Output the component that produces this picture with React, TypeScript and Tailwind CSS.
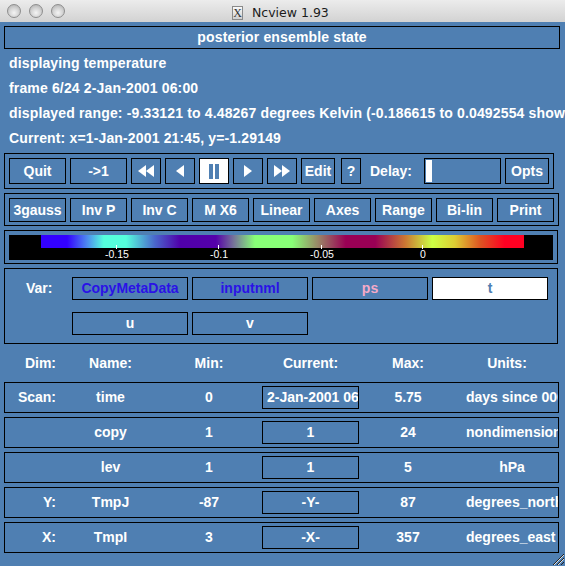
import React from 'react';

function Btn({
  w,
  h,
  ml = 0,
  children,
  className = '',
}: {
  w: string;
  h: string;
  ml?: number;
  children?: React.ReactNode;
  className?: string;
}) {
  return (
    <div
      className={`flex shrink-0 items-center justify-center border border-black font-bold text-[14px] text-white ${w} ${h} ${className}`}
      style={ml ? { marginLeft: ml } : undefined}
    >
      {children}
    </div>
  );
}

function Tri({ dir, n }: { dir: 'l' | 'r'; n: number }) {
  const one = (x: number) =>
    dir === 'l' ? `M${x + 8} 0 L${x} 6 L${x + 8} 12 Z` : `M${x} 0 L${x + 8} 6 L${x} 12 Z`;
  return (
    <svg width={n * 8} height="12" viewBox={`0 0 ${n * 8} 12`}>
      {Array.from({ length: n }).map((_, i) => (
        <path key={i} d={one(i * 8)} fill="#fff" />
      ))}
    </svg>
  );
}

const dims = [
  { dim: 'Scan:', name: 'time', min: '0', cur: '2-Jan-2001 06:00', curLeft: true, max: '5.75', units: 'days since 0000-00-00', unitsLeft: true },
  { dim: '', name: 'copy', min: '1', cur: '1', max: '24', units: 'nondimensional', unitsLeft: true },
  { dim: '', name: 'lev', min: '1', cur: '1', max: '5', units: 'hPa' },
  { dim: 'Y:', name: 'TmpJ', min: '-87', cur: '-Y-', max: '87', units: 'degrees_north', unitsLeft: true },
  { dim: 'X:', name: 'TmpI', min: '3', cur: '-X-', max: '357', units: 'degrees_east', unitsLeft: true },
];

const ticks = [
  { x: 107, label: '-0.15' },
  { x: 209, label: '-0.1' },
  { x: 312, label: '-0.05' },
  { x: 413, label: '0' },
];

export default function App() {
  return (
    <div className="relative h-[566px] w-[565px] overflow-hidden bg-[#4f7fb2] font-['Liberation_Sans',Arial,sans-serif] text-white">
      {/* title bar */}
      <div className="relative flex h-[22px] items-center bg-[linear-gradient(to_bottom,#ececec,#d2d2d2)]">
        <div className="flex gap-[8px] pl-[7px]">
          {[0, 1, 2].map((i) => (
            <div
              key={i}
              className="h-[14px] w-[14px] rounded-full border border-[#8e8e8e] bg-[radial-gradient(circle_at_50%_65%,#f4f4f4_0%,#d6d6d6_45%,#a9a9a9_100%)]"
            />
          ))}
        </div>
        <div className="absolute left-[232px] top-[4px] flex items-center gap-[9px]">
          <div className="flex h-[14px] w-[11px] items-center justify-center border border-[#8a8a8a] bg-[linear-gradient(to_bottom,#fafafa,#cfcfcf)] font-['Liberation_Serif',serif] text-[12px] leading-none text-[#333]">
            X
          </div>
          <span className="font-['DejaVu_Sans',sans-serif] text-[12.5px] text-[#1b1b1b]">Ncview 1.93</span>
        </div>
      </div>

      <div className="pl-[4px] text-[14px] font-bold tracking-[0.15px]">
        {/* header box */}
        <div className="mt-[4px] flex h-[23px] w-[556px] items-center justify-center border border-black">
          posterior ensemble state
        </div>

        <div className="mt-[2px] pl-[5px] whitespace-nowrap">
          <div className="flex h-[25px] items-center">displaying temperature</div>
          <div className="flex h-[25px] items-center">frame 6/24 2-Jan-2001 06:00</div>
          <div className="flex h-[25px] items-center">
            displayed range: -9.33121 to 4.48267 degrees Kelvin (-0.186615 to 0.0492554 shown)
          </div>
          <div className="flex h-[25px] items-center">Current: x=1-Jan-2001 21:45, y=-1.29149</div>
        </div>

        {/* control row */}
        <div className="mt-[2px] flex w-[550px] items-center border border-black p-[4px] tracking-normal">
          <Btn w="w-[57px]" h="h-[26px]">Quit</Btn>
          <Btn w="w-[57px]" h="h-[26px]" ml={4}>-&gt;1</Btn>
          <Btn w="w-[30px]" h="h-[26px]" ml={4}><Tri dir="l" n={2} /></Btn>
          <Btn w="w-[30px]" h="h-[26px]" ml={4}><Tri dir="l" n={1} /></Btn>
          <Btn w="w-[30px]" h="h-[26px]" ml={4} className="bg-white">
            <div className="flex gap-[2px]">
              <div className="h-[15px] w-[4px] bg-[#4f7fb2]" />
              <div className="h-[15px] w-[4px] bg-[#4f7fb2]" />
            </div>
          </Btn>
          <Btn w="w-[30px]" h="h-[26px]" ml={4}><Tri dir="r" n={1} /></Btn>
          <Btn w="w-[30px]" h="h-[26px]" ml={4}><Tri dir="r" n={2} /></Btn>
          <Btn w="w-[34px]" h="h-[26px]" ml={4}>Edit</Btn>
          <Btn w="w-[20px]" h="h-[26px]" ml={6}>?</Btn>
          <div className="ml-[9px] w-[44px] shrink-0 whitespace-nowrap">Delay:</div>
          <div className="ml-[10px] flex h-[26px] w-[77px] shrink-0 items-center border border-black pl-[1px]">
            <div className="h-[22px] w-[6px] bg-white" />
          </div>
          <Btn w="w-[44px]" h="h-[26px]" ml={4}>Opts</Btn>
        </div>

        {/* option row */}
        <div className="mt-[4px] flex w-[555px] gap-[4px] border border-black px-[4px] pb-[3px] pt-[4px] tracking-normal">
          {['3gauss', 'Inv P', 'Inv C', 'M X6', 'Linear', 'Axes', 'Range', 'Bi-lin', 'Print'].map((t) => (
            <Btn key={t} w="w-[57px]" h="h-[24px]" className="whitespace-nowrap">
              {t}
            </Btn>
          ))}
        </div>

        {/* colorbar */}
        <div className="mt-[4px] w-[554px] border border-black px-[4px] pb-[3px] pt-[4px]">
          <div className="relative h-[25px] w-[544px] bg-black">
            <div className="absolute left-[32px] top-0 h-[13px] w-[483px] bg-[linear-gradient(to_right,#3300ff_0%,#3300ff_5.4%,#4d88f0_9.5%,#55ffdd_13%,#55ffdd_17.6%,#4a66cc_23.6%,#5000aa_28.8%,#5500aa_36.2%,#777799_40%,#88ff77_44.3%,#88ff77_52%,#998866_57.3%,#990055_63.1%,#990055_69.2%,#cc7733_75.4%,#ccff44_81%,#ddcc33_85.7%,#dd5522_90.9%,#ff0022_96%,#ff0022_100%)]" />
            {ticks.map((t) => (
              <React.Fragment key={t.label}>
                <div className="absolute top-[10px] h-[4px] w-[1px] bg-white" style={{ left: t.x }} />
                <div
                  className="absolute top-[14px] -translate-x-1/2 text-[10.5px] font-normal leading-[11px] tracking-normal"
                  style={{ left: t.x + 1 }}
                >
                  {t.label}
                </div>
              </React.Fragment>
            ))}
          </div>
        </div>

        {/* var box */}
        <div className="mt-[4px] flex w-[554px] border border-black py-[8px] tracking-normal">
          <div className="w-[67px] shrink-0 pl-[21px]">
            <div className="flex h-[23px] items-center">Var:</div>
          </div>
          <div className="grid grid-cols-[repeat(4,116px)] gap-x-[4px] gap-y-[12px]">
            <Btn w="w-[116px]" h="h-[23px]" className="!text-[#2a12e6]">CopyMetaData</Btn>
            <Btn w="w-[116px]" h="h-[23px]" className="!text-[#2a12e6]">inputnml</Btn>
            <Btn w="w-[116px]" h="h-[23px]" className="!text-[#f5aac8]">ps</Btn>
            <Btn w="w-[116px]" h="h-[23px]" className="bg-white !text-[#4f7fb2]">t</Btn>
            <Btn w="w-[116px]" h="h-[23px]">u</Btn>
            <Btn w="w-[116px]" h="h-[23px]">v</Btn>
          </div>
        </div>

        {/* dims header */}
        <div className="flex h-[38px] items-center pl-[1px] tracking-normal">
          <div className="w-[51px] text-right">Dim:</div>
          <div className="w-[109px] text-center">Name:</div>
          <div className="w-[88px] text-center">Min:</div>
          <div className="ml-[9px] w-[97px] text-center">Current:</div>
          <div className="w-[98px] text-center">Max:</div>
          <div className="ml-[9px] w-[82px] text-center">Units:</div>
        </div>

        <div className="flex flex-col gap-[4px] tracking-normal">
          {dims.map((d) => (
            <div key={d.name} className="flex h-[31px] w-[555px] items-center whitespace-nowrap border border-black">
              <div className="w-[51px] shrink-0 text-right">{d.dim}</div>
              <div className="w-[109px] shrink-0 text-center">{d.name}</div>
              <div className="w-[88px] shrink-0 text-center">{d.min}</div>
              <div
                className={`ml-[9px] flex h-[23px] w-[97px] shrink-0 items-center overflow-hidden border border-black ${
                  d.curLeft ? 'justify-start pl-[4px]' : 'justify-center'
                }`}
              >
                {d.cur}
              </div>
              <div className="w-[98px] shrink-0 text-center">{d.max}</div>
              <div
                className={`ml-[9px] flex w-[92px] shrink-0 overflow-hidden ${
                  d.unitsLeft ? 'justify-start' : 'justify-center'
                }`}
              >
                {d.units}
              </div>
            </div>
          ))}
        </div>
      </div>

      {/* resize grip */}
      <svg className="absolute bottom-0 right-0" width="15" height="15" viewBox="0 0 15 15">
        <line x1="14" y1="3" x2="3" y2="14" stroke="#222" strokeWidth="1" />
        <line x1="14" y1="7" x2="7" y2="14" stroke="#222" strokeWidth="1" />
        <line x1="14" y1="11" x2="11" y2="14" stroke="#222" strokeWidth="1" />
        <line x1="14" y1="4" x2="4" y2="14" stroke="#ddd" strokeWidth="1" />
        <line x1="14" y1="8" x2="8" y2="14" stroke="#ddd" strokeWidth="1" />
      </svg>
    </div>
  );
}
